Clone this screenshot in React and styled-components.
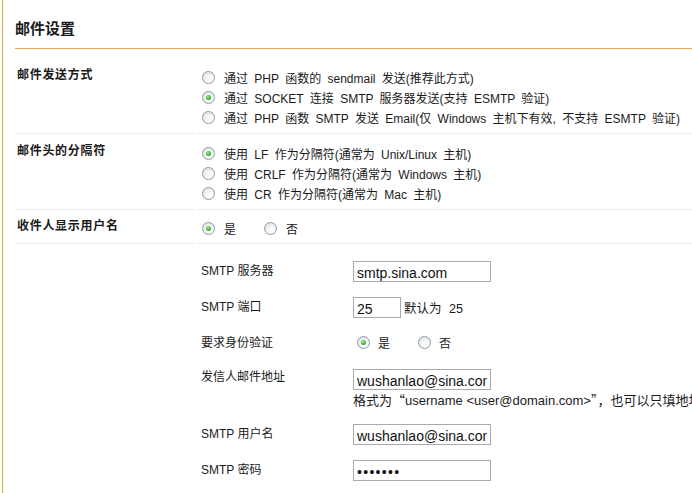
import React from "react";
import styled, { createGlobalStyle } from "styled-components";

const GlobalStyle = createGlobalStyle`
  html, body {
    margin: 0;
    padding: 0;
    background: #fff;
    overflow: hidden;
  }
  body {
    font-family: "Liberation Sans", "Noto Sans CJK SC", sans-serif;
    font-size: 12px;
    color: #1a1a1a;
  }
`;

const Page = styled.div`
  margin-left: 2px;
  border-left: 1px solid #e2a64f;
  padding-left: 12px;
  min-height: 493px;
`;

const Title = styled.div`
  padding: 20px 0 10px;
  line-height: 18px;
  font-size: 15px;
  font-weight: bold;
  border-bottom: 1px solid #e6a955;
`;

const Row = styled.div`
  display: flex;
  gap: 2px;
`;

const LabelCell = styled.div`
  width: 178px;
  flex: none;
  padding: ${(p) => p.$top}px 0 0 2px;
  line-height: 16px;
  font-weight: bold;
  letter-spacing: 0.7px;
  border-bottom: 1px solid #ececec;
`;

const ValueCell = styled.div`
  flex: 1;
  padding: ${(p) => p.$top}px 0 ${(p) => p.$bottom}px 4px;
  border-bottom: 1px solid #ececec;
  white-space: nowrap;
  word-spacing: 3px;
`;

const Choice = styled.div`
  display: flex;
  align-items: center;
  height: ${(p) => p.$h || 20}px;
  padding-left: ${(p) => p.$indent || 1}px;
`;

const RadioMark = styled.span`
  position: relative;
  flex: none;
  width: 11px;
  height: 11px;
  border-radius: 50%;
  border: 1px solid #8d9aa6;
  background: radial-gradient(circle at 65% 70%, #ffffff 0%, #f2f3f5 45%, #d6dadf 100%);
  margin-right: ${(p) => p.$gap || 9}px;

  &::after {
    content: "";
    display: ${(p) => (p.$checked ? "block" : "none")};
    position: absolute;
    left: 3px;
    top: 3px;
    width: 5px;
    height: 5px;
    border-radius: 50%;
    background: radial-gradient(circle at 40% 35%, #9ef07e 0%, #3cb83a 55%, #1f8d1f 100%);
  }
`;

const Option = styled.span`
  margin-right: ${(p) => p.$after || 0}px;
`;

const SubTable = styled.div`
  padding: 9px 0 6px;
`;

const SubRow = styled.div`
  display: flex;
  padding: 8px 0 7px;
`;

const SubLabel = styled.div`
  width: 152px;
  flex: none;
  line-height: ${(p) => (p.$top ? 16 : 21)}px;
  word-spacing: 0;
`;

const SubValue = styled.div`
  display: flex;
  flex-direction: column;
  align-items: flex-start;
`;

const Inline = styled.div`
  display: flex;
  align-items: center;
  height: ${(p) => p.$h || 21}px;
`;

const TextInput = styled.input`
  box-sizing: border-box;
  width: ${(p) => p.$w || 138}px;
  height: 21px;
  border: 1px solid #a7abb0;
  padding: 3px 3px 0;
  margin: 0;
  font-family: "Liberation Sans", "Noto Sans CJK SC", sans-serif;
  font-size: 14px;
  letter-spacing: ${(p) => (p.type === "password" ? "1.3px" : "0")};
  color: #111;
  background: #fff;
  outline: none;
`;

const Note = styled.span`
  margin-left: 3px;
  word-spacing: 4px;
  font-size: 12.5px;
`;

const Hint = styled.div`
  line-height: 17px;
  padding-top: 1px;
  word-spacing: 0;
  font-size: 13px;
`;

const Quote = styled.span`
  font-family: "Noto Sans CJK SC", sans-serif;
`;

const Radio = ({ checked, label, gap, after }) => (
  <>
    <RadioMark $checked={checked} $gap={gap} />
    <Option $after={after}>{label}</Option>
  </>
);

const SettingRow = ({ label, top, bottom, children }) => (
  <Row>
    <LabelCell $top={top}>{label}</LabelCell>
    <ValueCell $top={top} $bottom={bottom}>
      {children}
    </ValueCell>
  </Row>
);

export default function App() {
  return (
    <>
      <GlobalStyle />
      <Page>
        <Title>邮件设置</Title>

        <SettingRow label="邮件发送方式" top={18} bottom={6}>
          <Choice>
            <Radio label="通过 PHP 函数的 sendmail 发送(推荐此方式)" />
          </Choice>
          <Choice>
            <Radio checked label="通过 SOCKET 连接 SMTP 服务器发送(支持 ESMTP 验证)" />
          </Choice>
          <Choice>
            <Radio label="通过 PHP 函数 SMTP 发送 Email(仅 Windows 主机下有效, 不支持 ESMTP 验证)" />
          </Choice>
        </SettingRow>

        <SettingRow label="邮件头的分隔符" top={9} bottom={6}>
          <Choice>
            <Radio checked label="使用 LF 作为分隔符(通常为 Unix/Linux 主机)" />
          </Choice>
          <Choice>
            <Radio label="使用 CRLF 作为分隔符(通常为 Windows 主机)" />
          </Choice>
          <Choice>
            <Radio label="使用 CR 作为分隔符(通常为 Mac 主机)" />
          </Choice>
        </SettingRow>

        <SettingRow label="收件人显示用户名" top={8} bottom={5}>
          <Choice>
            <Radio checked label="是" after={28} />
            <Radio label="否" />
          </Choice>
        </SettingRow>

        <Row>
          <LabelCell $top={0} />
          <ValueCell $top={0} $bottom={0}>
            <SubTable>
              <SubRow>
                <SubLabel>SMTP 服务器</SubLabel>
                <SubValue>
                  <TextInput defaultValue="smtp.sina.com" />
                </SubValue>
              </SubRow>
              <SubRow>
                <SubLabel>SMTP 端口</SubLabel>
                <SubValue>
                  <Inline>
                    <TextInput $w={48} defaultValue="25" />
                    <Note>默认为 25</Note>
                  </Inline>
                </SubValue>
              </SubRow>
              <SubRow>
                <SubLabel>要求身份验证</SubLabel>
                <SubValue>
                  <Inline $h={19}>
                    <Choice $h={19} $indent={4}>
                      <Radio checked label="是" gap={8} after={28} />
                      <Radio label="否" gap={8} />
                    </Choice>
                  </Inline>
                </SubValue>
              </SubRow>
              <SubRow>
                <SubLabel $top>发信人邮件地址</SubLabel>
                <SubValue>
                  <TextInput defaultValue="wushanlao@sina.com" />
                  <Hint>
                    格式为<Quote>“</Quote>username &lt;user@domain.com&gt;<Quote>”</Quote>，也可以只填地址
                  </Hint>
                </SubValue>
              </SubRow>
              <SubRow>
                <SubLabel>SMTP 用户名</SubLabel>
                <SubValue>
                  <TextInput defaultValue="wushanlao@sina.com" />
                </SubValue>
              </SubRow>
              <SubRow>
                <SubLabel>SMTP 密码</SubLabel>
                <SubValue>
                  <TextInput type="password" defaultValue="1234567" />
                </SubValue>
              </SubRow>
            </SubTable>
          </ValueCell>
        </Row>
      </Page>
    </>
  );
}
